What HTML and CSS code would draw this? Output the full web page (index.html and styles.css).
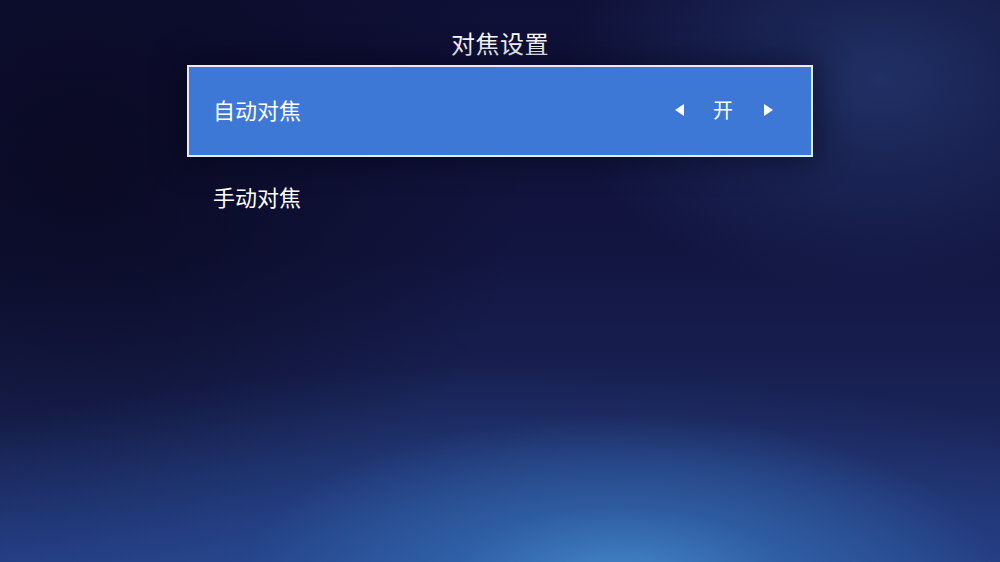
FILE: index.html
```html
<!DOCTYPE html>
<html lang="zh">
<head>
<meta charset="utf-8">
<link rel="stylesheet" href="styles.css">
</head>
<body>
<div class="screen">
  <h1 class="title">对焦设置</h1>
  <div class="menu">
    <div class="row active">
      <span class="label">自动对焦</span>
      <span class="control">
        <svg class="tri" width="9" height="12" viewBox="0 0 9 12"><polygon points="9,0 9,12 0,6" fill="#fff"/></svg>
        <span class="value">开</span>
        <svg class="tri" width="9" height="12" viewBox="0 0 9 12"><polygon points="0,0 0,12 9,6" fill="#fff"/></svg>
      </span>
    </div>
    <div class="row">
      <span class="label">手动对焦</span>
    </div>
  </div>
</div>
</body>
</html>
```
FILE: styles.css
```css
html, body {
  margin: 0;
  padding: 0;
}
body {
  width: 1000px;
  height: 562px;
  overflow: hidden;
  font-family: "Noto Sans CJK SC", "Noto Sans", sans-serif;
  color: #fff;
}
.screen {
  width: 1000px;
  height: 562px;
  box-sizing: border-box;
  padding-top: 30px;
  display: flex;
  flex-direction: column;
  align-items: center;
  background:
    radial-gradient(ellipse 380px 170px at 62% 104%, rgba(70,140,205,0.95) 0%, rgba(55,115,185,0.55) 45%, rgba(40,80,150,0) 100%),
    radial-gradient(ellipse 800px 240px at 50% 108%, rgba(40,85,160,0.7) 0%, rgba(30,60,130,0) 100%),
    radial-gradient(ellipse 320px 220px at 88% 14%, rgba(38,58,115,0.75) 0%, rgba(30,45,100,0) 100%),
    radial-gradient(ellipse 450px 400px at 8% 30%, rgba(8,8,30,0.8) 0%, rgba(8,8,30,0) 100%),
    linear-gradient(180deg, #0f1037 0%, #121540 45%, #1a2458 75%, #24387c 100%);
}
.title {
  margin: 0;
  font-size: 24px;
  line-height: 26px;
  font-weight: 400;
  letter-spacing: 0.5px;
}
.menu {
  margin-top: 9px;
  width: 626px;
  display: flex;
  flex-direction: column;
}
.row {
  height: 82px;
  box-sizing: border-box;
  display: flex;
  align-items: center;
  justify-content: space-between;
  padding: 0 38px 0 26px;
  font-size: 22px;
}
.row.active {
  height: 92px;
  border: 2px solid #e6ecf7;
  background: #3e78d6;
  padding: 0 38px 0 24px;
  box-shadow: 0 0 28px 6px rgba(0, 0, 20, 0.45);
}
.label {
  line-height: 30px;
  font-weight: 400;
  margin-bottom: 4px;
}
.control {
  display: flex;
  align-items: center;
  margin-bottom: 2px;
}
.value {
  font-size: 20px;
  font-weight: 400;
  margin: 0 31px 0 29px;
  line-height: 24px;
}
.tri {
  display: block;
}
```
